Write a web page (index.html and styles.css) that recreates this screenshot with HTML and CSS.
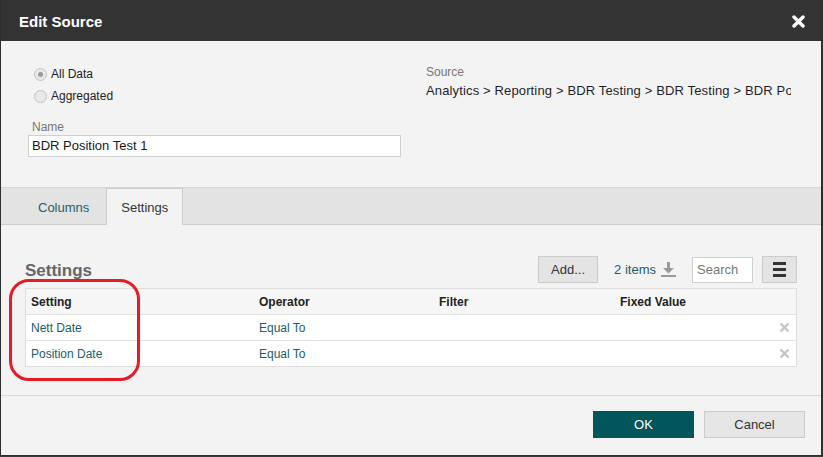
FILE: index.html
```html
<!DOCTYPE html>
<html>
<head>
<meta charset="utf-8">
<title>Edit Source</title>
<link rel="stylesheet" href="styles.css">
</head>
<body>
<div class="dialog">
  <div class="dlg-header">
    <span class="dlg-title">Edit Source</span>
    <svg class="dlg-close" width="13" height="13" viewBox="0 0 13 13"><path d="M2 2L11 11M11 2L2 11" stroke="#fff" stroke-width="3.4" stroke-linecap="round"/></svg>
  </div>

  <div class="top">
    <div class="top-left">
      <div class="radio-row"><span class="radio checked"></span><span>All Data</span></div>
      <div class="radio-row"><span class="radio"></span><span>Aggregated</span></div>
      <div class="field-label name-label">Name</div>
      <div class="text-input">BDR Position Test 1</div>
    </div>
    <div class="top-right">
      <div class="field-label">Source</div>
      <div class="path">Analytics &gt; Reporting &gt; BDR Testing &gt; BDR Testing &gt; BDR Position Test 1</div>
    </div>
  </div>

  <div class="tabs">
    <div class="tab">Columns</div>
    <div class="tab active">Settings</div>
  </div>

  <div class="content">
    <div class="toolbar">
      <h2 class="heading">Settings</h2>
      <div class="btn add-btn">Add...</div>
      <div class="items">2 items
        <svg class="dl-icon" width="15" height="16" viewBox="0 0 15 16"><rect x="6" y="0" width="3" height="6" fill="#9a9a9a"/><path d="M2 6H13L7.5 11.5Z" fill="#9a9a9a"/><rect x="0" y="13" width="15" height="2" fill="#9a9a9a"/></svg>
      </div>
      <div class="search">Search</div>
      <div class="btn menu-btn">
        <span class="bar"></span><span class="bar"></span><span class="bar"></span>
      </div>
    </div>

    <div class="grid-table">
      <div class="row head">
        <div class="cell">Setting</div>
        <div class="cell">Operator</div>
        <div class="cell">Filter</div>
        <div class="cell">Fixed Value</div>
        <div class="cell"></div>
      </div>
      <div class="row">
        <div class="cell">Nett Date</div>
        <div class="cell">Equal To</div>
        <div class="cell"></div>
        <div class="cell"></div>
        <div class="cell del"><svg width="11" height="11" viewBox="0 0 11 11"><path d="M1.5 1.5L9.5 9.5M9.5 1.5L1.5 9.5" stroke="#c4c4c4" stroke-width="2.4"/></svg></div>
      </div>
      <div class="row">
        <div class="cell">Position Date</div>
        <div class="cell">Equal To</div>
        <div class="cell"></div>
        <div class="cell"></div>
        <div class="cell del"><svg width="11" height="11" viewBox="0 0 11 11"><path d="M1.5 1.5L9.5 9.5M9.5 1.5L1.5 9.5" stroke="#c4c4c4" stroke-width="2.4"/></svg></div>
      </div>
    </div>
  </div>

  <div class="footer">
    <div class="btn ok-btn">OK</div>
    <div class="btn cancel-btn">Cancel</div>
  </div>

  <div class="annotation"></div>
</div>
</body>
</html>
```

FILE: styles.css
```css
* { box-sizing: border-box; }
html, body { margin: 0; padding: 0; }
body {
  background: #3b3b3b;
  font-family: "Liberation Sans", Arial, sans-serif;
  color: #222;
  width: 823px;
  height: 457px;
  overflow: hidden;
}
.dialog {
  position: relative;
  width: 823px;
  height: 456px;
  background: #f3f3f3;
  border-left: 1px solid #2e2e2e;
  border-right: 2px solid #2e2e2e;
  border-bottom: 1px solid #2e2e2e;
  display: flex;
  flex-direction: column;
}
.dlg-header {
  height: 41px;
  flex: none;
  background: #333333;
  display: flex;
  align-items: center;
  justify-content: space-between;
  padding: 0 16px 0 18px;
}
.dlg-title {
  color: #fff;
  font-weight: bold;
  font-size: 15px;
  margin-top: 1px;
}
.dlg-close { display: block; margin-top: 1px; }

.top {
  flex: none;
  height: 146px;
  display: grid;
  grid-template-columns: 373px 1fr;
  column-gap: 25px;
  padding: 22px 30px 0 27px;
}
.top-left { display: flex; flex-direction: column; }
.radio-row {
  height: 22px;
  display: flex;
  align-items: center;
  font-size: 12px;
  color: #222;
  padding-left: 6px;
}
.radio {
  width: 13px;
  height: 13px;
  border-radius: 50%;
  border: 1px solid #c2c2c2;
  background: #e9e9e9;
  margin-right: 4px;
  display: flex;
  align-items: center;
  justify-content: center;
}
.radio.checked::after {
  content: "";
  width: 5px;
  height: 5px;
  border-radius: 50%;
  background: #9b9b9b;
}
.field-label {
  font-size: 12px;
  color: #777;
  line-height: 16px;
}
.name-label { margin-top: 12px; padding-left: 4px; }
.text-input {
  height: 22px;
  background: #fff;
  border: 1px solid #cfcfcf;
  font-size: 13px;
  line-height: 20px;
  padding-left: 3px;
  color: #1a1a1a;
}
.top-right { padding-top: 1px; min-width: 0; }
.path {
  margin-top: 2px;
  font-size: 13px;
  line-height: 18px;
  letter-spacing: 0.14px;
  white-space: nowrap;
  overflow: hidden;
  color: #1f1f2a;
}

.tabs {
  flex: none;
  height: 38px;
  background: #e3e3e3;
  border-top: 1px solid #d6d6d6;
  border-bottom: 1px solid #cccccc;
  display: flex;
  align-items: flex-start;
  padding-left: 22px;
  gap: 2px;
}
.tab {
  height: 37px;
  margin-bottom: -1px;
  padding: 0 14px;
  border: 1px solid transparent;
  border-bottom: none;
  font-size: 13px;
  display: flex;
  align-items: center;
  color: #1f5f6b;
}
.tab.active {
  background: #f3f3f3;
  border-color: #cccccc;
  color: #333;
}

.content {
  flex: 1;
  padding: 31px 24px 0 24px;
}
.toolbar {
  height: 27px;
  display: flex;
  align-items: center;
}
.heading {
  margin: 0 auto 0 0;
  font-size: 17px;
  font-weight: bold;
  color: #666;
  padding-top: 2px;
}
.btn {
  height: 27px;
  background: #e4e4e4;
  border: 1px solid #cbcbcb;
  font-size: 13px;
  color: #333;
  display: flex;
  align-items: center;
  justify-content: center;
}
.add-btn { width: 60px; }
.items {
  margin-left: 16px;
  font-size: 13px;
  color: #1a5f6e;
  display: flex;
  align-items: center;
}
.dl-icon { margin-left: 5px; }
.search {
  margin-left: 16px;
  width: 61px;
  height: 26px;
  background: #fff;
  border: 1px solid #cfcfcf;
  font-size: 13px;
  color: #777;
  line-height: 24px;
  padding-left: 4px;
}
.menu-btn {
  margin-left: 9px;
  width: 35px;
  flex-direction: column;
  gap: 3px;
}
.bar {
  width: 13px;
  height: 3px;
  background: #333;
  display: block;
}

.grid-table {
  margin-top: 5px;
  border: 1px solid #dedede;
  background: #fff;
}
.row {
  display: grid;
  grid-template-columns: 228px 180px 181px 1fr 26px;
  height: 26px;
  border-bottom: 1px solid #e1e1e1;
  font-size: 12px;
  color: #19606c;
}
.row:last-child { border-bottom: none; height: 25px; }
.row.head {
  background: #f6f6f6;
  font-weight: bold;
  color: #222;
}
.cell {
  display: flex;
  align-items: center;
  padding-left: 5px;
  white-space: nowrap;
}
.cell.del { padding-left: 9px; }

.footer {
  flex: none;
  height: 60px;
  border-top: 1px solid #d9d9d9;
  display: flex;
  justify-content: flex-end;
  align-items: flex-start;
  gap: 10px;
  padding: 15px 16px 0 0;
}
.ok-btn {
  width: 101px;
  background: #00565a;
  border-color: #00565a;
  color: #fff;
}
.cancel-btn {
  width: 101px;
  background: #e6e6e6;
}

.annotation {
  position: absolute;
  left: 8px;
  top: 279px;
  width: 131px;
  height: 102px;
  border: 3px solid #e51c26;
  border-radius: 20px;
  pointer-events: none;
}
```
